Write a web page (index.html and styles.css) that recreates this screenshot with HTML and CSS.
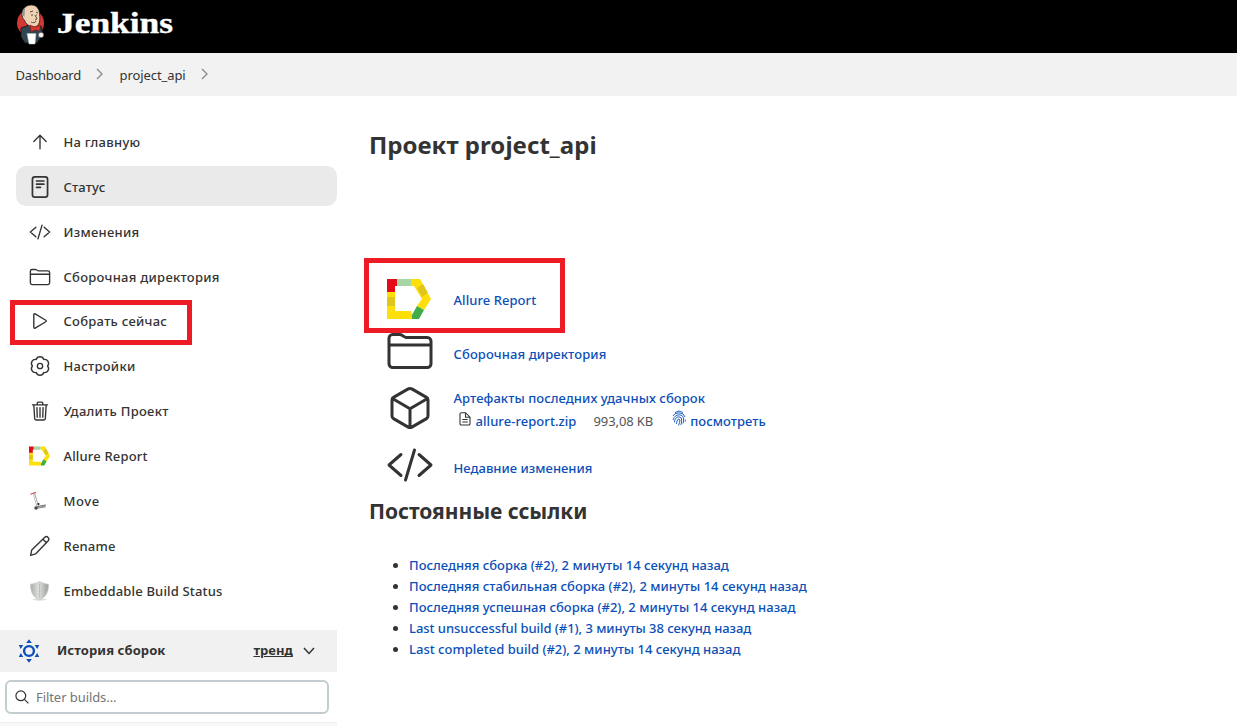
FILE: index.html
```
<!DOCTYPE html>
<html lang="ru">
<head>
<meta charset="utf-8">
<title>project_api [Jenkins]</title>
<link rel="stylesheet" href="styles.css">
</head>
<body>
<svg class="defs" width="0" height="0">
  <symbol id="folder" viewBox="0 0 512 512"><path d="M440 432H72a40 40 0 01-40-40V120a40 40 0 0140-40h75.900a40 40 0 0122.200 6.700l27.800 18.600a40 40 0 0022.200 6.700H440a40 40 0 0140 40v240a40 40 0 01-40 40zM32 192h448"/></symbol>
  <symbol id="code" viewBox="0 0 512 512"><path d="M160 368L32 256l128-112M352 368l128-112-128-112M304 96l-96 320"/></symbol>
  <symbol id="allure" viewBox="0 0 44 40"><path fill="#ffdf0a" d="M0 12h8v20h16l3 8H0zM24 0h9l11 20-7 11-7-4 5-7-8-13h-3z"/><path fill="#e30b17" d="M0 0h10v7H8v6H0z"/><path fill="#a8d5a6" d="M10 0h14v7H10z"/><path fill="#e0c61a" d="M0 18h8v9H0zM30 9l6-4 5 9-6 4z"/><path fill="#3fae49" d="M25 36l5-9 7 4-5 9h-7z"/></symbol>
</svg>
<header class="top">
  <svg class="butler" viewBox="0 0 30 42">
    <ellipse cx="14.500" cy="19" rx="13.500" ry="13.500" fill="#d33833"/>
    <path d="M5 24l8-3 6 3 6-2 2 8-6 9H9l-4-6z" fill="#2f4552" stroke="#111" stroke-width=".8"/>
    <path d="M6.500 9c0-5 4-8 9-8s8 4 8 9c1 7 0 12-5 13-5 0-9-3-10-7-2-1-3-4-2-7z" fill="#efd2b4" stroke="#222" stroke-width=".8"/>
    <path d="M6 11c0-5 2-7 3-7l-.5 9z" fill="#9a9590"/>
    <path d="M14 8l3-1M20 8l2 1M15 11h2M20 11h1M19 11l2 4-2 1M15 18c2 1 4 1 5-1" fill="none" stroke="#443" stroke-width=".9"/>
    <path d="M14 21l5 2 5-2v6l-5-1-4 2z" fill="#d33833" stroke="#711" stroke-width=".5"/>
    <path d="M11 29.500h9l-1 10.500h-6z" fill="#fff" stroke="#bbb" stroke-width=".5"/>
    <circle cx="25" cy="31" r="2.800" fill="#f2eeea" stroke="#333" stroke-width=".6"/>
  </svg>
  <span class="wordmark">Jenkins</span>
</header>
<nav class="crumbs">
  <span class="dash">Dashboard</span><svg class="chev" viewBox="0 0 8 12"><path d="M1 1l5 5-5 5"/></svg>
  <span class="proj">project_api</span><svg class="chev" viewBox="0 0 8 12"><path d="M1 1l5 5-5 5"/></svg>
</nav>
<div class="body">
  <aside class="side">
    <div class="tasks">
      <a class="task"><svg class="ic" viewBox="0 0 512 512"><path d="M112 244l144-144 144 144M256 120v292"/></svg><span>На главную</span></a>
      <a class="task on"><svg class="ic" viewBox="0 0 512 512"><rect x="80" y="20" width="352" height="472" rx="56" stroke-width="40"/><path d="M176 116h170M176 190h170M176 264h90" stroke-width="40"/></svg><span>Статус</span></a>
      <a class="task"><svg class="ic"><use href="#code"/></svg><span>Изменения</span></a>
      <a class="task"><svg class="ic"><use href="#folder"/></svg><span>Сборочная директория</span></a>
      <a class="task"><svg class="ic" viewBox="0 0 512 512"><path d="M112 111v290c0 17.400 17 28.500 31 20.200l247.900-148.400c12.100-7.300 12.100-26.400 0-33.600L143 90.800c-14-8.300-31 2.800-31 20.200z"/></svg><span>Собрать сейчас</span></a>
      <a class="task"><svg class="ic gear" viewBox="0 0 24 24"><path d="M20.200 12A4.300 4.300 0 0116.100 19.100 4.300 4.300 0 017.900 19.100 4.300 4.300 0 013.800 12 4.300 4.300 0 017.900 4.900 4.300 4.300 0 0116.100 4.900 4.300 4.300 0 0120.200 12z"/><circle cx="12" cy="12" r="2.900"/></svg><span>Настройки</span></a>
      <a class="task"><svg class="ic" viewBox="0 0 512 512"><path d="M112 112l20 320c.9 18.500 14.400 32 32 32h184c17.700 0 30.900-13.500 32-32l20-320M80 112h352M192 112V72a24 24 0 0124-24h80a24 24 0 0124 24v40M256 176v224M184 176l8 224M328 176l-8 224"/></svg><span>Удалить Проект</span></a>
      <a class="task lat"><svg class="ic art"><use href="#allure"/></svg><span>Allure Report</span></a>
      <a class="task lat move"><svg class="ic art" viewBox="0 0 20 20"><path d="M1.500 3l4.500-1.500" stroke="#d44" stroke-width="1.300"/><path d="M4.500 2.500L8 15" stroke="#999" stroke-width="2.200"/><path d="M4.500 3.500L8 15" stroke="#f4f4f4" stroke-width="1"/><path d="M5 17l11-3v2.500L6 18z" fill="#999"/><path d="M8 15.500l8-1.500" stroke="#555" stroke-width=".8"/><circle cx="6.500" cy="17" r="1.700" fill="#444"/><circle cx="9" cy="13" r="1.100" fill="#222"/></svg><span>Move</span></a>
      <a class="task lat"><svg class="ic" viewBox="0 0 512 512"><path d="M38 474l26-126L362 56c28-26 62-20 82 0s24 54-2 82L152 440zM322 98l84 84"/></svg><span>Rename</span></a>
      <a class="task lat"><svg class="ic art" viewBox="0 0 20 20"><defs><linearGradient id="sh"><stop offset="0" stop-color="#a9aca8"/><stop offset=".45" stop-color="#dfe1dd"/><stop offset="1" stop-color="#9a9d99"/></linearGradient></defs><ellipse cx="10" cy="18.500" rx="7" ry="1.200" fill="#ddd"/><path d="M10 .5C7 2 4 3 1 3.200 1 11 3.500 16 10 19c6.500-3 9-8 9-15.800C16 3 13 2 10 .5z" fill="url(#sh)" stroke="#c8cac6" stroke-width=".8"/><path d="M10 3v13" stroke="#999" stroke-dasharray="1.500 1.500" stroke-width=".6"/></svg><span>Embeddable Build Status</span></a>
    </div>
    <div class="hist">
      <svg class="sun" viewBox="0 0 22 24"><circle cx="11" cy="12" r="4.900" fill="none" stroke="#0b4fb8" stroke-width="2.400"/><path fill="#0b4fb8" d="M11 .3l2.800 3.700H8.200zM11 23.700L8.200 20h5.600zM.8 6h4.500L2.700 10zM21.200 6l-2 4-2.600-4zM.8 18l2-4 2.500 4zM21.200 18h-4.600l2.600-4z"/></svg>
      <b class="ht">История сборок</b><b class="trend">тренд</b>
      <svg class="down" viewBox="0 0 12 8"><path d="M1 1l5 5.500L11 1"/></svg>
    </div>
    <div class="filter"><svg class="mag" viewBox="0 0 14 14"><circle cx="5.800" cy="5.800" r="4.900"/><path d="M9.400 9.400l4 4"/></svg><span>Filter builds...</span></div>
    <div class="rest"></div>
  </aside>
  <main class="main">
    <h1>Проект project_api</h1>
    <div class="rows">
      <div class="row r1"><svg class="big al"><use href="#allure"/></svg><a>Allure Report</a></div>
      <div class="row r2"><svg class="big"><use href="#folder"/></svg><a>Сборочная директория</a></div>
      <div class="row r3"><svg class="big" viewBox="0 0 512 512"><path d="M448 341.400V170.600A32 32 0 00432.100 143l-152-88.500a48 48 0 00-48.200 0l-152 88.500A32 32 0 0064 170.600v170.800A32 32 0 0079.900 369l152 88.500a48 48 0 0048.200 0l152-88.500A32 32 0 00448 341.400zM69 153.900l187 110.100 187-110.100M256 463.900V264"/></svg>
        <div class="arts"><a>Артефакты последних удачных сборок</a>
          <div class="file"><svg class="doc" viewBox="0 0 12 14"><path d="M1 2q0-1.300 1.300-1.300h4.200l4.500 4.500v6.500q0 1.300-1.300 1.300H2.300Q1 13 1 11.700zM6.500 1v4.200h4.300M3.300 7.500h5.400M3.300 10h5.400"/></svg><a>allure-report.zip</a><span class="size">993,08 KB</span><svg class="fp" viewBox="0 0 14 16"><path d="M3 2.500Q7-.5 11 2.500M1 6q1-3 6-3.200 5 .2 6 4.200M1 10q1.800-5.200 6-5.200 4.800.2 4.600 5.200-.1 2-.6 3.500M2.300 12.300Q3.200 6.800 7 6.800q3.200.2 2.700 4.200-.2 2-.8 4M4.300 14Q5 9 7 8.900q1.500.2.600 3.600L6.500 15.500M13.300 9.500v2"/></svg><a>посмотреть</a></div></div></div>
      <div class="row r4"><svg class="big"><use href="#code"/></svg><a>Недавние изменения</a></div>
    </div>
    <h2>Постоянные ссылки</h2>
    <ul>
      <li><a>Последняя сборка (#2), 2 минуты 14 секунд назад</a></li>
      <li><a>Последняя стабильная сборка (#2), 2 минуты 14 секунд назад</a></li>
      <li><a>Последняя успешная сборка (#2), 2 минуты 14 секунд назад</a></li>
      <li class="first-fail"><a>Last unsuccessful build (#1), 3 минуты 38 секунд назад</a></li>
      <li><a>Last completed build (#2), 2 минуты 14 секунд назад</a></li>
    </ul>
  </main>
</div>
<div class="mark m1"></div>
<div class="mark m2"></div>
</body>
</html>
```
FILE: styles.css
```
* { box-sizing: border-box; }
body { margin: 0; height: 726px; overflow: hidden; background: #fff; color: #333; font: 500 13px/20px "Noto Sans", "Open Sans", sans-serif; position: relative; }
.defs { position: absolute; }
svg { flex: none; }
a, span, b { white-space: nowrap; }
.top { height: 53px; background: #000; display: flex; align-items: flex-start; padding: 4px 0 0 16px; }
.butler { width: 30px; height: 42px; }
.wordmark { margin: 3px 0 0 10.500px; color: #fff; font: bold 30px/32px "Liberation Serif", serif; transform: scaleX(1.180); transform-origin: 0 50%; -webkit-text-stroke: .4px #fff; }
.crumbs { height: 43px; background: #f2f2f2; display: flex; align-items: center; padding-left: 15.500px; font-weight: 400; }
.dash { letter-spacing: -.2px; }
.proj { letter-spacing: -.080px; }
.chev { width: 8px; height: 12px; margin: 0 15.500px 2px 15px; fill: none; stroke: #888; stroke-width: 1.300; }
.body { display: flex; height: 630px; }
.side { width: 337px; flex: none; }
.tasks { padding: 26px 0 0 16px; display: flex; flex-direction: column; gap: 4.860px; }
.task { height: 40px; display: flex; align-items: center; padding-left: 13px; gap: 12.500px; border-radius: 10px; color: #333; letter-spacing: .270px; }
.task.lat { letter-spacing: .170px; }
.task.move { letter-spacing: .6px; }
.task.on { background: #eaeaea; margin: -.7px 0 .7px; padding-top: 1px; letter-spacing: .150px; }
.ic { width: 22px; height: 22px; fill: none; stroke: #333; stroke-width: 32; stroke-linecap: round; stroke-linejoin: round; }
.gear { stroke-width: 1.500; }
.art { stroke: none; height: 20px; width: 21px; margin-right: 1px; }
.hist { margin-top: 19.400px; height: 42px; background: #f1f1f1; display: flex; align-items: center; padding-left: 18px; }
.sun { width: 22px; height: 24px; }
.ht { margin: 0 0 1px 17px; letter-spacing: .090px; }
.trend { margin: 0 0 1px 88px; letter-spacing: 0; text-decoration: underline; }
.down { width: 12px; height: 8px; margin-left: 10px; fill: none; stroke: #333; stroke-width: 1.500; }
.filter { margin: 8px 8px 8px 5px; height: 34px; border: 2px solid #c3ccd1; border-radius: 6px; display: flex; align-items: center; padding-left: 8px; gap: 7px; color: #757575; font-weight: 400; letter-spacing: -.070px; }
.mag { width: 14px; height: 14px; fill: none; stroke: #333; stroke-width: 1.200; }
.rest { height: 10px; background: #f8f8f8; border-top: 1px solid #eee; }
.main { padding-left: 32px; }
h1 { margin: 32px 0 0; font-size: 24px; line-height: 34px; font-weight: 700; letter-spacing: .040px; }
.rows { margin-top: 106px; padding-left: 16.500px; display: flex; flex-direction: column; }
.row { display: flex; gap: 20px; letter-spacing: .060px; }
.row a, li a { color: #0b4fb8; }
.big { width: 48px; height: 48px; fill: none; stroke: #333; stroke-width: 32; stroke-linecap: round; stroke-linejoin: round; }
.al { width: 44px; height: 40px; margin: 11px 2.500px 0 1.500px; stroke: none; }
.r1 { height: 59px; }
.r1 a { margin-top: 22px; }
.r2 { height: 57px; letter-spacing: .110px; }
.r2 a { margin-top: 17px; }
.r3 { height: 57px; }
.arts { margin-top: 4px; }
.r4 { height: 54px; letter-spacing: .020px; }
.r4 a { margin-top: 17px; }
.file { display: flex; align-items: center; margin-top: 2px; padding-left: 5px; }
.doc { width: 12px; height: 14px; margin: 0 5px 3px 0; fill: none; stroke: #333; stroke-width: 1.100; }
.size { margin: 0 18.500px 0 17px; color: #555; font-weight: 400; letter-spacing: -.100px; }
.fp { width: 14px; height: 16px; margin: 0 4.500px 5px 0; fill: none; stroke: #0b4fb8; stroke-width: .9; }
h2 { margin: 1px 0 0; font-size: 21px; line-height: 30px; font-weight: 700; letter-spacing: -.050px; }
ul { margin: 29px 0 0; padding-left: 40px; letter-spacing: .005px; }
li { height: 21px; line-height: 21px; }
.first-fail { letter-spacing: -.050px; }
.mark { position: absolute; border: 5px solid #ed1c24; }
.m1 { left: 10px; top: 300px; width: 182px; height: 45px; }
.m2 { left: 364px; top: 258px; width: 201px; height: 75px; }
```
